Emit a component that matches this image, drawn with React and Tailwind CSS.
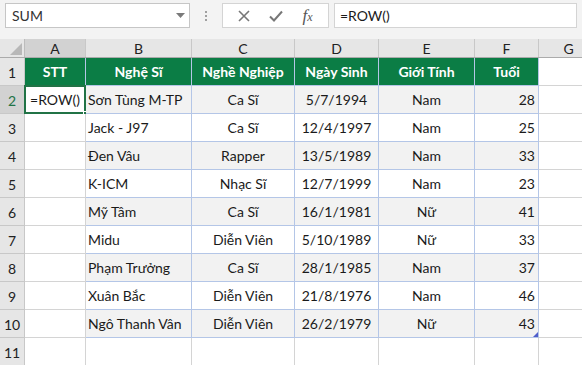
import React from "react";

const cols = [
  { key: "A", w: "w-[61px]" },
  { key: "B", w: "w-[106px]" },
  { key: "C", w: "w-[103px]" },
  { key: "D", w: "w-[84px]" },
  { key: "E", w: "w-[96px]" },
  { key: "F", w: "w-[64px]" },
  { key: "G", w: "w-[60px]" },
];

const headers = ["STT", "Nghệ Sĩ", "Nghề Nghiệp", "Ngày Sinh", "Giới Tính", "Tuổi"];

const data = [
  ["=ROW()", "Sơn Tùng M-TP", "Ca Sĩ", "5/7/1994", "Nam", "28"],
  ["", "Jack - J97", "Ca Sĩ", "12/4/1997", "Nam", "25"],
  ["", "Đen Vâu", "Rapper", "13/5/1989", "Nam", "33"],
  ["", "K-ICM", "Nhạc Sĩ", "12/7/1999", "Nam", "23"],
  ["", "Mỹ Tâm", "Ca Sĩ", "16/1/1981", "Nữ", "41"],
  ["", "Midu", "Diễn Viên", "5/10/1989", "Nữ", "33"],
  ["", "Phạm Trưởng", "Ca Sĩ", "28/1/1985", "Nam", "37"],
  ["", "Xuân Bắc", "Diễn Viên", "21/8/1976", "Nam", "46"],
  ["", "Ngô Thanh Vân", "Diễn Viên", "26/2/1979", "Nữ", "43"],
];

const align = ["justify-center", "justify-start pl-[2px]", "justify-center", "justify-center", "justify-center", "justify-end pr-[3px]"];

export default function App() {
  const font = { fontFamily: "Lato, 'Liberation Sans', sans-serif" };
  return (
    <div className="w-[582px] h-[365px] overflow-hidden bg-white text-[14px] text-[#1a1a1a]" style={font}>
      {/* formula bar */}
      <div className="h-[31px] bg-[#f3f3f3] flex items-center pl-[5px] pr-[5px]">
        <div className="w-[185px] h-[25px] bg-white border border-[#c6c6c6] flex items-center justify-between pl-[6px] pr-[4px] text-[14px] text-[#333]">
          <span>SUM</span>
          <svg width="9" height="5" viewBox="0 0 9 5"><path d="M0 0h9L4.5 5z" fill="#7a7a7a" /></svg>
        </div>
        <div className="w-[32px] flex flex-col items-center justify-center gap-[2px]">
          <div className="w-[2px] h-[2px] bg-[#a0a0a0]" />
          <div className="w-[2px] h-[2px] bg-[#a0a0a0]" />
          <div className="w-[2px] h-[2px] bg-[#a0a0a0]" />
        </div>
        <div className="w-[107px] h-[25px] bg-white border border-[#d4d4d4] flex items-center justify-around px-[6px]">
          <svg width="12" height="12" viewBox="0 0 12 12"><path d="M1 1L11 11M11 1L1 11" stroke="#777" strokeWidth="1.6" /></svg>
          <svg width="14" height="12" viewBox="0 0 14 12"><path d="M1 6.5L5 10.5L13 1.5" stroke="#777" strokeWidth="2" fill="none" /></svg>
          <span className="text-[#555] italic text-[17px] leading-none" style={{ fontFamily: "'Liberation Serif', serif" }}>
            f<span className="text-[12px]">x</span>
          </span>
        </div>
        <div className="ml-[5px] flex-1 h-[25px] bg-white border border-[#d4d4d4] flex items-center pl-[5px] text-[14px]">
          =ROW()
        </div>
      </div>
      {/* spacer */}
      <div className="h-[8px] bg-[#f3f3f3]" />
      {/* column headers */}
      <div className="flex h-[19px] bg-[#e6e6e6] border-b border-[#ababab]">
        <div className="w-[25px] shrink-0 border-r border-[#bcbcbc] relative overflow-hidden">
          <svg className="absolute right-[2px] bottom-[2px]" width="12" height="12" viewBox="0 0 12 12"><path d="M12 0V12H0z" fill="#b8b8b8" /></svg>
        </div>
        {cols.map((c) => (
          <div
            key={c.key}
            className={`${c.w} shrink-0 border-r border-[#c8c8c8] flex items-center justify-center text-[14px] text-[#222] ${c.key === "A" ? "bg-[#d2d2d2]" : ""}`}
          >
            {c.key}
          </div>
        ))}
      </div>
      {/* header row 1 */}
      <div className="flex h-[28px]">
        <div className="w-[25px] shrink-0 bg-[#e6e6e6] border-r border-b border-[#c8c8c8] flex items-end justify-center pb-[2px] text-[14px] text-[#222]">1</div>
        {headers.map((h, i) => (
          <div key={i} className={`${cols[i].w} shrink-0 bg-[#0b7d45] border-r border-b border-[#b4c6e7] flex items-end justify-center pb-[3px] text-white font-bold text-[14px]`}>
            {h}
          </div>
        ))}
        <div className={`${cols[6].w} shrink-0 border-r border-b border-[#d4d4d4]`} />
      </div>
      {data.map((row, r) => {
        const gray = r % 2 === 0;
        const rowNum = r + 2;
        return (
          <div key={r} className="flex h-[28px]">
            <div className={`w-[25px] shrink-0 border-r border-b border-[#c8c8c8] flex items-end justify-center pb-[2px] text-[14px] ${rowNum === 2 ? "bg-[#d2d2d2] text-[#217346]" : "bg-[#e6e6e6] text-[#222]"}`}>
              {rowNum}
            </div>
            {row.map((v, i) => {
              const active = r === 0 && i === 0;
              return (
                <div
                  key={i}
                  className={`${cols[i].w} shrink-0 relative border-r border-b ${i === 0 ? "border-[#d4d4d4] bg-white" : `border-[#b4c6e7] ${gray ? "bg-[#f2f2f2]" : "bg-white"}`} flex items-end pb-[3px] ${align[i]} whitespace-nowrap`}
                >
                  {v}
                  {active && (
                    <div className="absolute left-[-1px] top-[-1px] right-[-1px] bottom-[-1px] border-2 border-[#217346]">
                      <div className="absolute right-[-4px] bottom-[-4px] w-[5px] h-[5px] bg-[#217346] border border-white" />
                    </div>
                  )}
                  {r === 8 && i === 5 && (
                    <div className="absolute right-[0px] bottom-[0px] w-0 h-0 border-l-[5px] border-l-transparent border-b-[5px] border-b-[#4f5ecb]" />
                  )}
                </div>
              );
            })}
            <div className={`${cols[6].w} shrink-0 border-r border-b border-[#d4d4d4]`} />
          </div>
        );
      })}
      <div className="flex h-[28px]">
        <div className="w-[25px] shrink-0 bg-[#e6e6e6] border-r border-b border-[#c8c8c8] flex items-end justify-center pb-[2px] text-[14px] text-[#222]">11</div>
        {cols.map((c) => (
          <div key={c.key} className={`${c.w} shrink-0 border-r border-b border-[#d4d4d4]`} />
        ))}
      </div>
    </div>
  );
}
